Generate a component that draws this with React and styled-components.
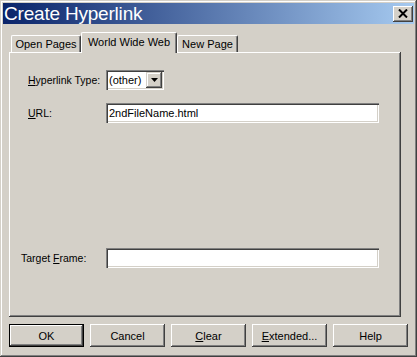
import React from 'react';
import styled, { createGlobalStyle } from 'styled-components';

const GlobalStyle = createGlobalStyle`
	html, body {
		margin: 0;
		padding: 0;
		background: #d4d0c8;
	}
	body {
		font-family: "Liberation Sans", Arial, sans-serif;
		font-size: 11px;
		color: #000;
	}
`;

const raised = `
	box-shadow: inset -1px -1px #404040, inset 1px 1px #ffffff, inset -2px -2px #808080;
`;

const sunken = `
	box-shadow: inset 1px 1px #808080, inset 2px 2px #404040, inset -1px -1px #ffffff, inset -2px -2px #d4d0c8;
`;

const Window = styled.div`
	box-sizing: border-box;
	width: 417px;
	height: 357px;
	padding: 3px;
	background: #d4d0c8;
	display: flex;
	flex-direction: column;
	box-shadow: inset -1px -1px #404040, inset 1px 1px #d4d0c8, inset -2px -2px #808080, inset 2px 2px #ffffff;
`;

const TitleBar = styled.div`
	height: 21px;
	flex: none;
	display: flex;
	align-items: center;
	justify-content: space-between;
	padding: 0 1px 0 1px;
	background: linear-gradient(to right, #0a246a, #a6caf0);
`;

const Title = styled.span`
	color: #ffffff;
	font-size: 19px;
	line-height: 21px;
	letter-spacing: -0.2px;
`;

const CloseButton = styled.div`
	box-sizing: border-box;
	width: 20px;
	height: 16px;
	background: #d4d0c8;
	display: flex;
	align-items: center;
	justify-content: center;
	${raised}
`;

const Content = styled.div`
	flex: 1;
	display: flex;
	flex-direction: column;
	padding: 8px 0 7px 6px;
	min-height: 0;
`;

const TabStrip = styled.div`
	display: flex;
	align-items: flex-end;
	padding-left: 2px;
	height: 20px;
	flex: none;
`;

const Tab = styled.div`
	position: relative;
	box-sizing: border-box;
	width: ${({ width }) => width}px;
	height: ${({ active }) => (active ? 21 : 17)}px;
	margin-bottom: ${({ active }) => (active ? -1 : 0)}px;
	z-index: ${({ active }) => (active ? 2 : 0)};
	padding-top: 2px;
	text-align: center;
	font-size: 11px;
	line-height: ${({ active }) => (active ? 15 : 13)}px;
	background: #d4d0c8;
	border-top: 1px solid #ffffff;
	border-left: 1px solid #ffffff;
	border-right: 1px solid #404040;
	border-radius: 2px 2px 0 0;
	box-shadow: inset -1px 0 #808080;
	white-space: nowrap;
`;

const Panel = styled.div`
	flex: 1;
	box-sizing: border-box;
	width: 392px;
	display: flex;
	flex-direction: column;
	padding: 18px 0 49px 0;
	background: #d4d0c8;
	${raised}
`;

const Row = styled.div`
	display: flex;
	align-items: center;
	padding-left: ${({ indent }) => indent}px;
	margin-top: ${({ gap }) => (gap === 'auto' ? 'auto' : `${gap}px`)};
`;

const Label = styled.label`
	width: ${({ width }) => width}px;
	flex: none;
	font-size: 10.5px;
	white-space: nowrap;
`;

const Key = styled.span`
	text-decoration: underline;
	text-underline-offset: 1px;
`;

const TextBox = styled.div`
	box-sizing: border-box;
	width: 273px;
	height: 20px;
	padding: 3px 3px 0 3px;
	background: #ffffff;
	font-size: 11px;
	line-height: 14px;
	${sunken}
`;

const Combo = styled.div`
	box-sizing: border-box;
	width: 58px;
	height: 20px;
	padding: 2px;
	display: flex;
	background: #ffffff;
	${sunken}
`;

const ComboText = styled.span`
	flex: 1;
	padding: 1px 0 0 1px;
	font-size: 11px;
	line-height: 14px;
`;

const ComboButton = styled.div`
	box-sizing: border-box;
	width: 16px;
	height: 16px;
	background: #d4d0c8;
	display: flex;
	align-items: center;
	justify-content: center;
	box-shadow: inset -1px -1px #404040, inset 1px 1px #d4d0c8, inset -2px -2px #808080, inset 2px 2px #ffffff;
`;

const ButtonRow = styled.div`
	display: flex;
	gap: 6px;
	margin-top: 7px;
	flex: none;
`;

const Button = styled.div`
	box-sizing: border-box;
	width: 75px;
	height: 23px;
	display: flex;
	align-items: center;
	justify-content: center;
	background: #d4d0c8;
	font-size: 11px;
	${({ primary }) =>
		primary
			? 'box-shadow: inset 0 0 0 1px #000000, inset -2px -2px #404040, inset 2px 2px #ffffff, inset -3px -3px #808080;'
			: raised}
`;

const CloseIcon = () => (
	<svg width="10" height="9" viewBox="0 0 10 9">
		<path d="M1 0.5 L9 8.5 M9 0.5 L1 8.5" stroke="#000" strokeWidth="2" />
	</svg>
);

const ArrowIcon = () => (
	<svg width="7" height="4" viewBox="0 0 7 4">
		<path d="M0 0 H7 L3.5 4 Z" fill="#000" />
	</svg>
);

const tabs = [
	{ label: 'Open Pages', width: 70 },
	{ label: 'World Wide Web', width: 96, active: true },
	{ label: 'New Page', width: 61 },
];

const buttons = [
	{ label: 'OK', primary: true },
	{ label: 'Cancel' },
	{ label: 'Clear', key: 'C', rest: 'lear' },
	{ label: 'Extended...', key: 'E', rest: 'xtended...' },
	{ label: 'Help' },
];

const App = () => (
	<>
		<GlobalStyle />
		<Window>
			<TitleBar>
				<Title>Create Hyperlink</Title>
				<CloseButton>
					<CloseIcon />
				</CloseButton>
			</TitleBar>
			<Content>
				<TabStrip>
					{tabs.map((t) => (
						<Tab key={t.label} width={t.width} active={t.active}>
							{t.label}
						</Tab>
					))}
				</TabStrip>
				<Panel>
					<Row indent={19} gap={0}>
						<Label width={78}>
							<Key>H</Key>yperlink Type:
						</Label>
						<Combo>
							<ComboText>(other)</ComboText>
							<ComboButton>
								<ArrowIcon />
							</ComboButton>
						</Combo>
					</Row>
					<Row indent={19} gap={13}>
						<Label width={78}>
							<Key>U</Key>RL:
						</Label>
						<TextBox>2ndFileName.html</TextBox>
					</Row>
					<Row indent={12} gap="auto">
						<Label width={85}>
							Target <Key>F</Key>rame:
						</Label>
						<TextBox />
					</Row>
				</Panel>
				<ButtonRow>
					{buttons.map((b) => (
						<Button key={b.label} primary={b.primary}>
							{b.key ? (
								<span>
									<Key>{b.key}</Key>
									{b.rest}
								</span>
							) : (
								b.label
							)}
						</Button>
					))}
				</ButtonRow>
			</Content>
		</Window>
	</>
);

export default App;
